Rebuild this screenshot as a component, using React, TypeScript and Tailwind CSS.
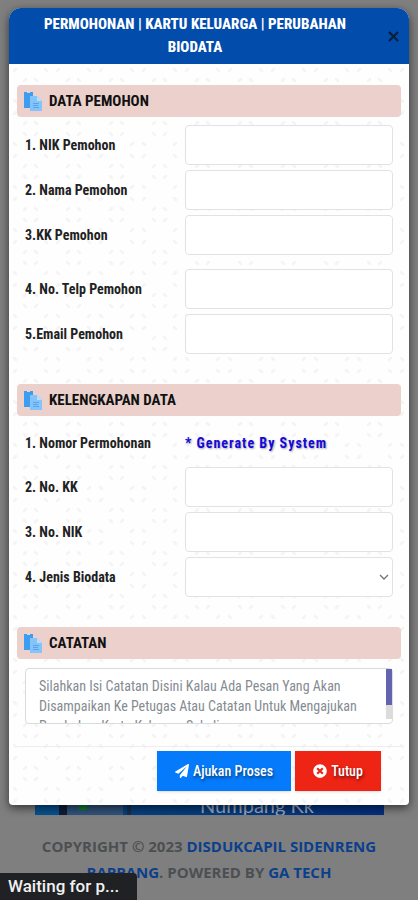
import React from 'react'
import { FaPaperPlane, FaTimesCircle } from 'react-icons/fa'

type Field = {
  id: string
  label: string
  type?: 'text' | 'email' | 'tel' | 'select'
}

const pemohon: Field[] = [
  { id: 'nik_pemohon', label: '1. NIK Pemohon' },
  { id: 'nama_pemohon', label: '2. Nama Pemohon' },
  { id: 'kk_pemohon', label: '3.KK Pemohon' },
]

const kontak: Field[] = [
  { id: 'telp_pemohon', label: '4. No. Telp Pemohon', type: 'tel' },
  { id: 'email_pemohon', label: '5.Email Pemohon', type: 'email' },
]

const kelengkapan: Field[] = [
  { id: 'no_kk', label: '2. No. KK' },
  { id: 'no_nik', label: '3. No. NIK' },
  { id: 'jenis_biodata', label: '4. Jenis Biodata', type: 'select' },
]

function Motif() {
  return (
    <svg className="absolute inset-0 h-full w-full" aria-hidden="true">
      <defs>
        <pattern id="motif" width="43" height="43" y="13" patternUnits="userSpaceOnUse">
          <g fill="none" stroke="#f4f4f4" strokeWidth="2.5" strokeLinecap="round">
            <path d="M15 17l2-2M26 15l2 2M15 26l2 2M26 28l2-2" />
            <path d="M5 7l2-2M36 5l2 2M5 36l2 2M36 38l2-2" />
          </g>
        </pattern>
      </defs>
      <rect width="100%" height="100%" fill="url(#motif)" />
    </svg>
  )
}

function DocIcon() {
  return (
    <svg width="18" height="20" viewBox="0 0 18 20" aria-hidden="true">
      <path d="M0 1h3v1h3v-1h3v4H6v12H0z" fill="#3d9df0" />
      <path d="M6 5h7l5 5v10H6z" fill="#85c4fb" />
      <path d="M13 5l5 5h-5z" fill="#b9defd" />
      <path d="M9 12.5h6M9 14.5h5M9 16.5h6" stroke="#4c9ce8" strokeWidth="0.8" />
    </svg>
  )
}

function SectionTitle({ children }: { children: React.ReactNode }) {
  return (
    <h3 className="flex h-8 items-center gap-[7px] rounded bg-[#eacdc8]/95 pl-[7px] text-[15px] font-bold text-[#111]">
      <DocIcon />
      {children}
    </h3>
  )
}

function FieldRow({ field }: { field: Field }) {
  const box = 'h-10 w-full rounded border border-[#dfe3e4] bg-white px-3 text-sm'
  return (
    <div className="grid grid-cols-[160px_1fr] items-center">
      <label htmlFor={field.id} className="text-sm font-bold text-[#222]">{field.label}</label>
      {field.type === 'select' ? (
        <div className="relative">
          <select id={field.id} className={`${box} block appearance-none`}>
            <option value=""></option>
          </select>
          <svg className="pointer-events-none absolute top-4 right-1" width="10" height="8" viewBox="0 0 10 8" fill="none" stroke="#777" strokeWidth="1.4">
            <path d="M1 2l4 4 4-4" />
          </svg>
        </div>
      ) : (
        <input id={field.id} type={field.type || 'text'} className={box} />
      )}
    </div>
  )
}

export default function App() {
  return (
    <div className="relative min-h-screen bg-[#7f7f7f] pt-2 font-['Roboto_Condensed',Roboto,sans-serif]">
      <div role="dialog" aria-labelledby="judul" className="relative mx-[9px] overflow-hidden rounded-t-xl rounded-b bg-[#fefefe] shadow-[0_3px_10px_rgba(0,0,0,0.6)]">
        <Motif />
        <div className="relative">
          <header className="flex h-14 items-center bg-[#024cac] pr-2">
            <h2 id="judul" className="flex-1 pl-3 text-center text-[15px] leading-[23px] font-extrabold text-white">
              PERMOHONAN | KARTU KELUARGA | PERUBAHAN BIODATA
            </h2>
            <button type="button" aria-label="Close" className="ml-4 flex h-5 w-4 items-center justify-center">
              <svg width="11" height="11" viewBox="0 0 11 11" stroke="#0a1f3d" strokeWidth="2.2">
                <path d="M1 1l9 9M10 1l-9 9" />
              </svg>
            </button>
          </header>

          <form className="px-2 pt-[21px]" onSubmit={e => e.preventDefault()}>
            <SectionTitle>DATA PEMOHON</SectionTitle>
            <div className="flex flex-col gap-[5px] px-2 pt-2">
              {pemohon.map(f => <FieldRow key={f.id} field={f} />)}
            </div>
            <div className="flex flex-col gap-[5px] px-2 pt-[14px] pb-[30px]">
              {kontak.map(f => <FieldRow key={f.id} field={f} />)}
            </div>

            <SectionTitle>KELENGKAPAN DATA</SectionTitle>
            <div className="flex flex-col gap-[5px] px-2 pt-2 pb-[30px]">
              <div className="grid h-[38px] grid-cols-[160px_1fr] items-center text-sm font-bold">
                <span className="text-[#222]">1. Nomor Permohonan</span>
                <span className="tracking-[1px] text-[#1508dc] [text-shadow:1px_1px_2px_#aaa]">* Generate By System</span>
              </div>
              {kelengkapan.map(f => <FieldRow key={f.id} field={f} />)}
            </div>

            <SectionTitle>CATATAN</SectionTitle>
            <div className="relative mx-2 mt-[9px] mb-[22px]">
              <textarea
                aria-label="Catatan"
                placeholder="Silahkan Isi Catatan Disini Kalau Ada Pesan Yang Akan Disampaikan Ke Petugas Atau Catatan Untuk Mengajukan Perubahan Kartu Keluarga Sekalian"
                className="block h-14 w-full resize-none overflow-hidden rounded border border-[#d8dcdd] bg-white py-[7px] pr-6 pl-[13px] text-sm leading-5 placeholder:text-[#858b91]"
              />
              <div className="absolute top-px right-px h-[50px] w-[6px] bg-[#dcdcdc]">
                <div className="h-9 bg-[#6264b0]" />
              </div>
            </div>

            <div className="flex justify-end gap-1 border-t border-[#eeeeee] pt-1 pr-5 pb-[14px]">
              <button type="button" className="flex h-10 w-[134px] items-center justify-center gap-1 bg-[#057bfb] text-sm font-medium text-white shadow-sm [text-shadow:1px_2px_3px_rgba(0,0,0,0.5)]">
                <FaPaperPlane size={14} />
                Ajukan Proses
              </button>
              <button type="button" className="flex h-10 w-[86px] items-center justify-center gap-1 bg-[#ee2415] text-sm font-medium text-white shadow-sm [text-shadow:1px_2px_3px_rgba(0,0,0,0.5)]">
                <FaTimesCircle size={14} />
                Tutup
              </button>
            </div>
          </form>
        </div>
      </div>

      <div className="mr-[34px] ml-[35px] flex h-[10px] items-end overflow-hidden bg-linear-to-r from-[#09497f] to-[#052f80]">
        <span className="h-full w-6 bg-[#075291]" />
        <span className="h-full w-2 bg-[#101d38]" />
        <span className="h-full w-14 bg-[#31537c]">
          <span className="ml-3 block h-[5px] w-2 bg-[#108030]" />
        </span>
        <span className="ml-1 h-full w-1 bg-[#19304f]" />
        <span className="ml-[69px] font-[Lato] text-xl leading-5 text-[#9eabc0]">Numpang Kk</span>
      </div>

      <footer className="px-8 pt-[18px] pb-4 text-center font-['Open_Sans','Noto_Sans',sans-serif] text-[15px] leading-[26px] font-bold text-[#4c4f52]">
        COPYRIGHT © 2023 <a href="#" className="text-[#0b3f8c]">DISDUKCAPIL SIDENRENG RAPPANG</a>. POWERED BY <a href="#" className="text-[#0b3f8c]">GA TECH</a>
      </footer>

      <div className="absolute bottom-0 left-0 flex h-7 w-[137px] items-center rounded-tr bg-[#202124] pl-2 font-[Roboto] text-[17px] font-medium text-[#f1f1f1]">
        Waiting for p...
      </div>
    </div>
  )
}
